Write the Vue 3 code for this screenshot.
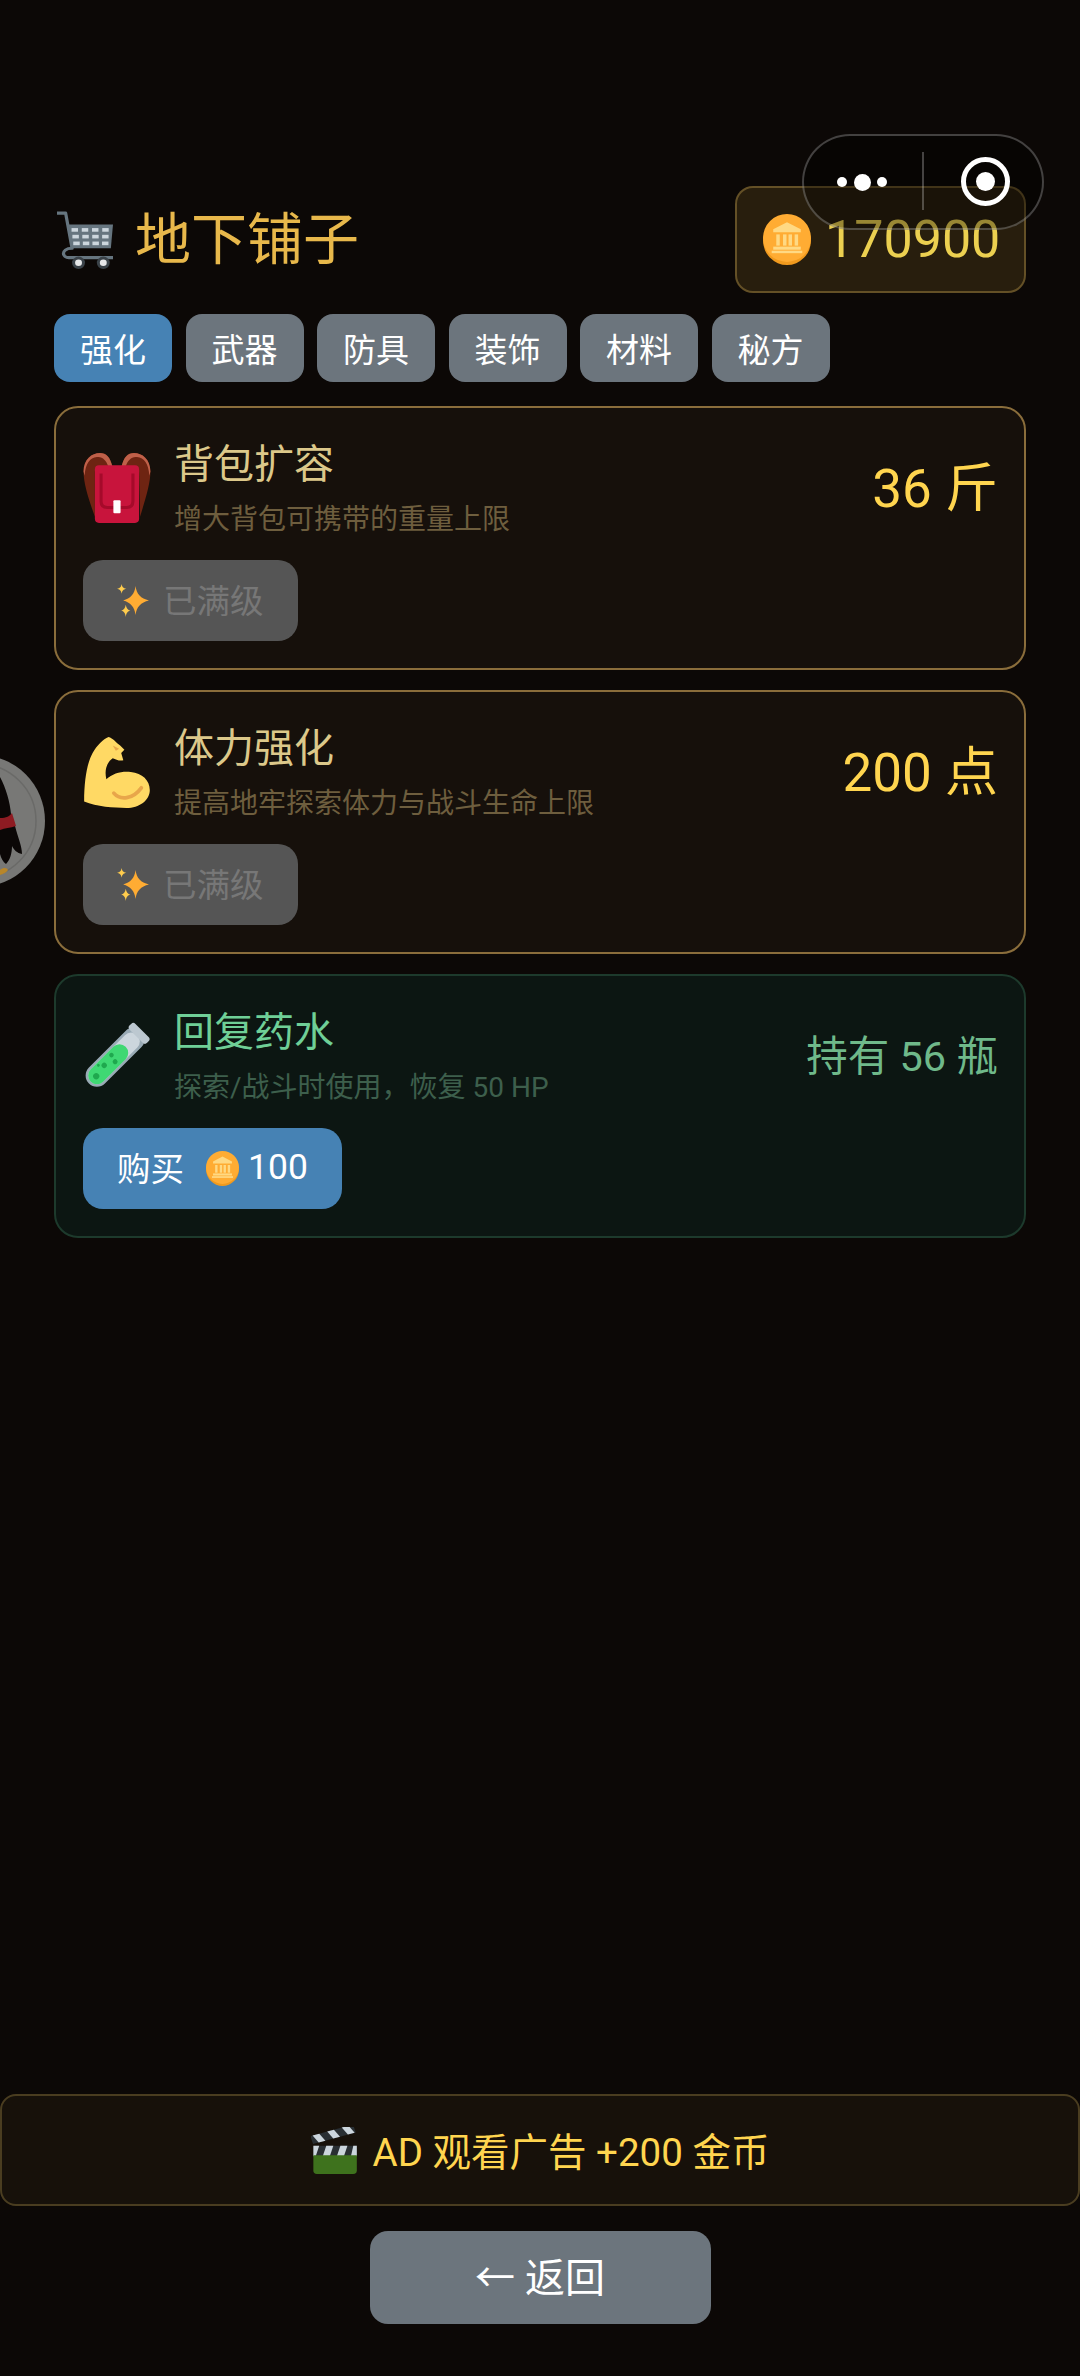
<template>
  <div class="page">
    <!-- 复用的小图标 -->
    <svg class="defs" width="0" height="0" aria-hidden="true">
      <symbol id="coin" viewBox="0 0 47 50">
        <ellipse cx="23.5" cy="26" rx="23.5" ry="24" fill="#f09a1e" />
        <ellipse cx="23.5" cy="23.5" rx="23.5" ry="23.5" fill="#ffac33" />
        <g fill="#ffd983">
          <polygon points="23.5,8 37,15 37,18 10,18 10,15" />
          <rect x="13" y="20" width="3.4" height="11" />
          <rect x="19.6" y="20" width="3.4" height="11" />
          <rect x="25" y="20" width="3.4" height="11" />
          <rect x="31" y="20" width="3.4" height="11" />
          <rect x="10" y="32" width="27" height="3" />
          <rect x="8.5" y="36" width="30" height="2.4" />
        </g>
      </symbol>
      <symbol id="sparkles" viewBox="0 0 32 32">
        <path d="M18 2 C19 10 23 14 31 16 C23 18 19 22 18 30 C17 22 13 18 6 16 C13 14 17 10 18 2Z" fill="#ffac33" />
        <path d="M4.500 0 C5 3 6 4 9 4.700 C6 5.500 5 6.500 4.500 9.500 C4 6.500 3 5.500 0 4.700 C3 4 4 3 4.500 0Z" fill="#ffcc4d" />
        <path d="M8.500 20 C9 23.500 10.500 25 13 25.800 C10.500 26.600 9 28 8.500 32 C8 28 6.500 26.600 4 25.800 C6.500 25 8 23.500 8.500 20Z" fill="#ffcc4d" />
      </symbol>
    </svg>

    <!-- 小程序胶囊 -->
    <div class="capsule">
      <div class="capsule-dots"><i></i><i class="big"></i><i></i></div>
      <span class="capsule-line"></span>
      <div class="capsule-target"><i></i></div>
    </div>

    <!-- 悬浮头像 -->
    <svg class="avatar" width="60" height="160" viewBox="0 0 60 160">
      <circle cx="-21" cy="81" r="66" fill="#787876" />
      <circle cx="-21" cy="81" r="57" fill="none" stroke="#6a6a68" stroke-width="1.500" />
      <path d="M0 37 C6 48 10 62 11 74 L15 86 C18 98 22 106 22 114 C17 113 14 110 12 106 C12 113 10 120 6 124 C3 122 1 118 0 114Z" fill="#0b0706" />
      <path d="M0 78 C6 78 10 76 12 73 L16 86 C10 88 5 88 0 90Z" fill="#8e1b22" />
      <path d="M0 130 C4 127 7 128 8 130 C6 133 3 134 0 135Z" fill="#b8862a" />
    </svg>

    <header class="head">
      <div class="head-title">
        <svg class="cart" width="56" height="58" viewBox="0 0 52 56" preserveAspectRatio="none">
          <path d="M0 2 H8 L14 36 C8 36 6 39 6 41 C6 43 8 45 11 45 H52" fill="none" stroke="#66757f" stroke-width="3" stroke-linejoin="round" />
          <polygon points="10,13 52,13 50,36 13,36" fill="#66757f" />
          <g fill="#ccd6dd">
            <rect v-for="c in cartCells" :key="c.k" :x="c.x" :y="c.y" width="6" height="3.500" />
          </g>
          <circle cx="20" cy="50" r="6" fill="#3a4248" />
          <circle cx="20" cy="50" r="3.200" fill="#e6e7e8" />
          <circle cx="43" cy="50" r="6" fill="#3a4248" />
          <circle cx="43" cy="50" r="3.200" fill="#e6e7e8" />
        </svg>
        <h1>地下铺子</h1>
      </div>
      <div class="gold">
        <svg class="gold-coin" width="48" height="51"><use href="#coin" /></svg>
        <span>170900</span>
      </div>
    </header>

    <nav class="tabs">
      <div v-for="(t, i) in tabs" :key="t" class="tab" :class="{ active: i === 0 }">{{ t }}</div>
    </nav>

    <section class="list">
      <article class="card">
        <div class="card-top">
          <svg class="card-icon" width="69" height="72" viewBox="0 0 66 70">
            <path d="M11 62 C5 45 0 30 0 18 C0 6 8 0 16 0 C22 0 26 4 28 13 H16 C12 13 11 16 11 20Z" fill="#6e2412" />
            <path d="M55 62 C60 45 65 30 65 18 C65 6 57 0 49 0 C43 0 39 4 37 13 H49 C53 13 54 16 54 20Z" fill="#6e2412" />
            <path d="M0 18 C0 6 8 0 16 0 C22 0 26 4 28 13 H24 C22 7 18 3 13 4 C6 5 2 10 1 22Z" fill="#bf6049" />
            <path d="M65 18 C65 6 57 0 49 0 C43 0 39 4 37 13 H41 C43 7 47 3 52 4 C59 5 63 10 64 22Z" fill="#bf6049" />
            <rect x="11" y="12" width="43" height="56" rx="4" fill="#c8143c" />
            <path d="M17 20 V47 Q17 53 23 53 H42 Q48 53 48 47 V20" fill="none" stroke="#a50a2a" stroke-width="3" />
            <rect x="29" y="46" width="7" height="12.500" rx="1" fill="#fff" />
          </svg>
          <div class="card-text">
            <div class="card-name">背包扩容</div>
            <div class="card-desc">增大背包可携带的重量上限</div>
          </div>
          <div class="card-value">36 斤</div>
        </div>
        <button class="btn maxed">
          <svg width="33" height="33"><use href="#sparkles" /></svg>
          <span>已满级</span>
        </button>
      </article>

      <article class="card">
        <div class="card-top">
          <svg class="card-icon" width="69" height="72" viewBox="0 0 63 68">
            <path d="M23 0 C27 1 31 6 34 8 L38 12 L35 15 L37 22 C33 23 30 21 27 20 C21 24 19 32 21 40 C27 34 36 32 44 33 C55 34 62 41 62 50 C62 60 52 67 40 67 C28 67 12 66 0 61 C0 40 3 24 8 15 C12 8 18 2 23 0Z" fill="#ffd964" />
            <path d="M28 53 C34 60 46 59 54 48" fill="none" stroke="#e8a64a" stroke-width="3.500" stroke-linecap="round" />
            <path d="M27 8 L33 11 L30 13Z" fill="#e8a64a" />
          </svg>
          <div class="card-text">
            <div class="card-name">体力强化</div>
            <div class="card-desc">提高地牢探索体力与战斗生命上限</div>
          </div>
          <div class="card-value">200 点</div>
        </div>
        <button class="btn maxed">
          <svg width="33" height="33"><use href="#sparkles" /></svg>
          <span>已满级</span>
        </button>
      </article>

      <article class="card potion">
        <div class="card-top">
          <svg class="card-icon" width="69" height="72" viewBox="0 0 66 70">
            <g transform="translate(13 53) rotate(-45)">
              <rect x="-11" y="-11" width="72" height="22" rx="11" fill="#99aab5" />
              <rect x="-8.500" y="-8.500" width="64" height="17" rx="8.500" fill="#ccd6dd" />
              <rect x="-8.500" y="-8.500" width="48" height="17" rx="8.500" fill="#3fd873" />
              <rect x="54" y="-12" width="8" height="24" rx="3" fill="#bcc8d0" />
              <circle cx="-1" cy="0" r="3" fill="#1fa84e" />
              <circle cx="12" cy="-2" r="2.600" fill="#1fa84e" />
              <circle cx="22" cy="3" r="2.400" fill="#1fa84e" />
              <circle cx="24" cy="-4" r="2.200" fill="#1fa84e" />
              <circle cx="8" cy="-6" r="1.400" fill="#1fa84e" />
            </g>
          </svg>
          <div class="card-text">
            <div class="card-name">回复药水</div>
            <div class="card-desc">探索/战斗时使用，恢复 50 HP</div>
          </div>
          <div class="card-value">持有 56 瓶</div>
        </div>
        <button class="btn buy">
          <span>购买</span>
          <svg class="buy-coin" width="33" height="35"><use href="#coin" /></svg>
          <span class="buy-price">100</span>
        </button>
      </article>
    </section>

    <footer class="foot">
      <div class="ad">
        <svg class="ad-icon" width="47" height="47" viewBox="0 0 40 45" preserveAspectRatio="none">
          <g transform="rotate(-17 3 17)">
            <rect x="2" y="8" width="38" height="8" fill="#292f33" />
            <polygon points="4,8 10,8 13,16 7,16" fill="#ccd6dd" />
            <polygon points="17,8 23,8 26,16 20,16" fill="#ccd6dd" />
            <polygon points="30,8 36,8 39,16 33,16" fill="#ccd6dd" />
          </g>
          <rect x="2" y="18" width="37" height="10" fill="#292f33" />
          <polygon points="2,18 7,18 4,28 2,28" fill="#ccd6dd" />
          <polygon points="13,18 19,18 16,28 10,28" fill="#ccd6dd" />
          <polygon points="25,18 31,18 28,28 22,28" fill="#ccd6dd" />
          <polygon points="36,18 39,18 39,28 34,28" fill="#ccd6dd" />
          <path d="M2 27 H39 V42 Q39 45 36 45 H5 Q2 45 2 42Z" fill="#3e721d" />
        </svg>
        <span>AD 观看广告 +200 金币</span>
      </div>
      <button class="back">← 返回</button>
    </footer>
  </div>
</template>

<script setup>
const tabs = ['强化', '武器', '防具', '装饰', '材料', '秘方']

// 购物车篮子上的三排格子
const cartCells = []
for (let r = 0; r < 3; r++) {
  for (let c = 0; c < 4; c++) {
    cartCells.push({ k: `${r}-${c}`, x: 13.5 + r * 0.8 + c * (9.5 - r * 0.3), y: 16.5 + r * 6.5 })
  }
}
</script>

<style>
html, body { margin: 0; background: #0c0806; }
</style>

<style scoped>
.page { position: relative; box-sizing: border-box; width: 1080px; height: 2376px; padding: 186px 0 52px; display: flex; flex-direction: column; background: #0c0806; overflow: hidden; font-family: Roboto, "Noto Sans CJK SC", sans-serif; }
.defs { position: absolute; }

.capsule { position: absolute; z-index: 5; left: 802px; top: 134px; box-sizing: border-box; width: 242px; height: 96px; border: 2.5px solid rgba(255,255,255,.24); border-radius: 48px; background: rgba(0,0,0,.35); }
.capsule-dots { position: absolute; left: 33px; top: 0; bottom: 0; width: 50px; display: flex; align-items: center; justify-content: space-between; }
.capsule-dots i { width: 10px; height: 10px; border-radius: 50%; background: #fff; }
.capsule-dots i.big { width: 17px; height: 17px; }
.capsule-line { position: absolute; left: 118px; top: 16px; width: 2px; height: 58px; background: rgba(255,255,255,.25); }
.capsule-target { position: absolute; left: 157px; top: 21px; box-sizing: border-box; width: 49px; height: 49px; border: 5px solid #fff; border-radius: 50%; display: flex; align-items: center; justify-content: center; }
.capsule-target i { width: 19px; height: 19px; border-radius: 50%; background: #fff; }

.avatar { position: absolute; left: 0; top: 740px; z-index: 4; }

.head { display: flex; align-items: center; justify-content: space-between; padding: 0 54px 0 57px; }
.head-title { display: flex; align-items: center; gap: 22px; }
.head-title h1 { margin: 0; font-size: 56px; line-height: 70px; font-weight: 400; color: #e8b84b; }
.gold { box-sizing: border-box; width: 291px; height: 107px; display: flex; align-items: center; gap: 14px; padding-left: 26px; border: 2px solid rgba(212,175,85,.35); border-radius: 18px; background: #281e0d; }
.gold-coin { flex-shrink: 0; }
.gold span { font-size: 52px; line-height: 60px; color: #ecd050; }

.tabs { display: flex; gap: 13.500px; margin: 21px 0 0 54px; }
.tab { box-sizing: border-box; height: 68px; padding: 0 26px; border-radius: 16px; display: flex; align-items: center; font-size: 33px; color: #fff; background: #6c757d; }
.tab.active { background: #4682b4; }

.list { display: flex; flex-direction: column; gap: 20px; margin: 24px 54px 0; }
.card { box-sizing: border-box; height: 264px; padding: 32px 26px 0 27px; border: 2px solid #8a6d3b; border-radius: 24px; background: #16100b; }
.card-top { display: flex; align-items: center; height: 97px; }
.card-icon { flex-shrink: 0; margin-right: 22px; }
.card-text { flex: 1; padding-top: 2px; }
.card-name { font-size: 40px; line-height: 50px; color: #dcc88a; }
.card-desc { margin-top: 11px; font-size: 28px; line-height: 38px; color: #6e5e3e; }
.card-value { font-size: 53px; line-height: 60px; color: #ffd54f; white-space: nowrap; }

.card.potion { border-color: #1d3a2c; background: #0c1612; }
.potion .card-name { color: #6fcf97; }
.potion .card-desc { color: #3d5f4c; }
.potion .card-value { font-size: 41.500px; color: #6fb98a; }

.btn { margin-top: 23px; box-sizing: border-box; height: 81px; padding: 0 34px 4px; display: flex; align-items: center; border: 0; border-radius: 20px; font-family: inherit; font-size: 33.500px; }
.btn.maxed { gap: 13px; background: #555; color: #777; }
.btn.buy { background: #4682b4; color: #fff; }
.btn svg { margin-top: 4px; }
.buy-coin { margin: 0 9px 0 22px; }
.buy-price { font-size: 35.500px; }

.foot { margin-top: auto; display: flex; flex-direction: column; align-items: center; gap: 25px; }
.ad { box-sizing: border-box; width: 100%; height: 112px; padding-bottom: 3px; display: flex; align-items: center; justify-content: center; gap: 15px; border: 2px solid #4a3d20; border-radius: 16px; background: #17110a; font-size: 38.500px; color: #ffd54f; }
.ad-icon { margin-top: 3px; }
.back { box-sizing: border-box; width: 341px; height: 93px; padding: 0 0 5px; border: 0; border-radius: 18px; background: #6c757d; color: #fff; font-family: inherit; font-size: 40px; }
</style>
